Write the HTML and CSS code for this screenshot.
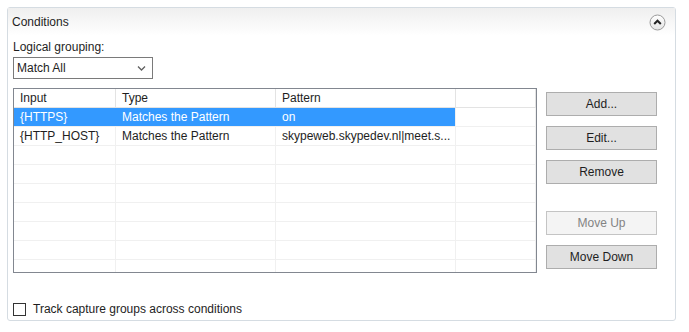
FILE: index.html
```html
<!DOCTYPE html>
<html lang="en">
<head>
    <meta charset="UTF-8">
    <title>Conditions</title>
    <link rel="stylesheet" href="styles.css">
</head>
<body>

    <div class="panel">
        <!-- Header -->
        <div class="panel-header">
            <span class="panel-title">Conditions</span>
            <span class="collapse-btn">
                <svg width="17" height="17" viewBox="0 0 17 17">
                    <defs>
                        <linearGradient id="cg" x1="0" y1="0" x2="0" y2="1">
                            <stop offset="0" stop-color="#ffffff"/>
                            <stop offset="1" stop-color="#e4e4e4"/>
                        </linearGradient>
                    </defs>
                    <circle cx="8.5" cy="8.5" r="7.5" fill="url(#cg)" stroke="#9a9a9a" stroke-width="1"/>
                    <path d="M5.2 10 L8.5 6.7 L11.8 10" fill="none" stroke="#222" stroke-width="2"/>
                </svg>
            </span>
        </div>

        <div class="panel-body">
            <div class="field-label">Logical grouping:</div>
            <div class="select">
                <span>Match All</span>
                <svg width="9" height="6" viewBox="0 0 9 6">
                    <path d="M1 1.5 L4.5 5 L8 1.5" fill="none" stroke="#606060" stroke-width="1.3"/>
                </svg>
            </div>

            <div class="main">
                <!-- Conditions list -->
                <div class="grid">
                    <table>
                        <thead>
                            <tr>
                                <th class="c1">Input</th>
                                <th class="c2">Type</th>
                                <th class="c3">Pattern</th>
                                <th></th>
                            </tr>
                        </thead>
                        <tbody>
                            <tr class="selected">
                                <td>{HTTPS}</td>
                                <td>Matches the Pattern</td>
                                <td>on</td>
                                <td class="blank"></td>
                            </tr>
                            <tr>
                                <td>{HTTP_HOST}</td>
                                <td>Matches the Pattern</td>
                                <td>skypeweb.skypedev.nl|meet.s...</td>
                                <td></td>
                            </tr>
                            <tr><td></td><td></td><td></td><td></td></tr>
                            <tr><td></td><td></td><td></td><td></td></tr>
                            <tr><td></td><td></td><td></td><td></td></tr>
                            <tr><td></td><td></td><td></td><td></td></tr>
                            <tr><td></td><td></td><td></td><td></td></tr>
                            <tr><td></td><td></td><td></td><td></td></tr>
                            <tr><td></td><td></td><td></td><td></td></tr>
                            <tr><td></td><td></td><td></td><td></td></tr>
                        </tbody>
                    </table>
                </div>

                <!-- Actions -->
                <div class="actions">
                    <button class="btn">Add...</button>
                    <button class="btn">Edit...</button>
                    <button class="btn">Remove</button>
                    <button class="btn disabled spaced">Move Up</button>
                    <button class="btn">Move Down</button>
                </div>
            </div>

            <label class="check-row">
                <span class="checkbox"></span>
                Track capture groups across conditions
            </label>
        </div>
    </div>

</body>
</html>
```

FILE: styles.css
```css
body {
    margin: 0;
    background-color: #ffffff;
    font-family: "Liberation Sans", Arial, sans-serif;
    font-size: 12px;
    color: #1e1e1e;
}
.panel {
    margin: 7px 0 0 7px;
    width: 667px;
    height: 312px;
    border: 1px solid #d5dce2;
    border-radius: 3px;
}
.panel-header {
    height: 28px;
    display: flex;
    align-items: center;
    justify-content: space-between;
    padding: 0 9px 0 4px;
    background: linear-gradient(#efefef, #ffffff);
}
.panel-title {
    color: #1e1e1e;
}
.collapse-btn {
    display: flex;
}
.panel-body {
    padding: 0 0 0 5px;
}
.field-label {
    margin-top: 3px;
    height: 16px;
    line-height: 16px;
}
.select {
    margin-top: 2px;
    width: 129px;
    height: 20px;
    border: 1px solid #7a7a7a;
    display: flex;
    align-items: center;
    justify-content: space-between;
    padding: 0 6px 0 3px;
}
.main {
    display: flex;
    align-items: flex-start;
    margin-top: 9px;
}
.grid {
    width: 522px;
    height: 183px;
    border: 1px solid #828790;
    overflow: hidden;
}
table {
    width: 522px;
    border-collapse: collapse;
    table-layout: fixed;
}
th, td {
    height: 18px;
    padding: 0 0 0 6px;
    text-align: left;
    font-weight: normal;
    border-right: 1px solid #f0f0f0;
    border-bottom: 1px solid #f0f0f0;
    white-space: nowrap;
    overflow: hidden;
}
th {
    border-right: 1px solid #e3e3e3;
    border-bottom: 1px solid #e3e3e3;
}
th.c1 {
    width: 95px;
}
th.c2 {
    width: 153px;
}
th.c3 {
    width: 173px;
}
tr.selected td {
    background-color: #3399ff;
    color: #ffffff;
    border-right-color: #3399ff;
}
tr.selected td:nth-child(3) {
    border-right-color: #f0f0f0;
}
tr.selected td.blank {
    background-color: #ffffff;
    border-right-color: #f0f0f0;
}
.actions {
    margin-left: 9px;
    padding-top: 4px;
    display: flex;
    flex-direction: column;
    gap: 10px;
}
.btn {
    width: 111px;
    height: 24px;
    background-color: #e1e1e1;
    border: 1px solid #adadad;
    font-family: "Liberation Sans", Arial, sans-serif;
    font-size: 12px;
    color: #1e1e1e;
    padding: 0;
}
.btn.spaced {
    margin-top: 17px;
}
.btn.disabled {
    background-color: #f4f4f4;
    border-color: #c4c4c4;
    color: #838383;
}
.check-row {
    margin-top: 28px;
    height: 16px;
    display: flex;
    align-items: center;
    gap: 7px;
}
.checkbox {
    width: 11px;
    height: 11px;
    border: 1px solid #333333;
    background-color: #ffffff;
}
```
